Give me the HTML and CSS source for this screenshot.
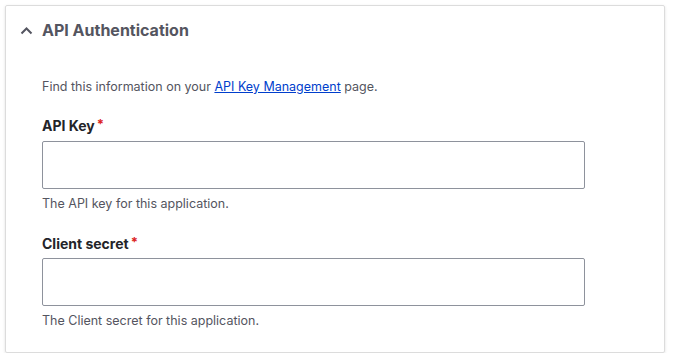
FILE: index.html
```html
<!DOCTYPE html>
<html lang="en">
<head>
    <meta charset="UTF-8">
    <meta name="viewport" content="width=device-width, initial-scale=1.0">
    <title>API Authentication</title>
    <link rel="stylesheet" href="styles.css">
</head>
<body>
    <details class="panel" open>
        <summary class="panel-title">
            <svg class="chevron" width="13" height="9" viewBox="0 0 13 9">
                <path d="M1.5 7.5 L6.5 2.5 L11.5 7.5" fill="none" stroke="#545560" stroke-width="2"/>
            </svg>
            API Authentication
        </summary>

        <div class="panel-body">
            <p class="intro">Find this information on your <a href="#">API Key Management</a> page.</p>

            <div class="field">
                <label for="apiKey">API Key<span class="req">*</span></label>
                <input type="text" id="apiKey">
                <div class="help">The API key for this application.</div>
            </div>

            <div class="field">
                <label for="clientSecret">Client secret<span class="req">*</span></label>
                <input type="text" id="clientSecret">
                <div class="help">The Client secret for this application.</div>
            </div>
        </div>
    </details>
</body>
</html>
```

FILE: styles.css
```css
/* Base Styles */
body {
    font-family: Inter, "Noto Sans", sans-serif;
    background-color: #ffffff;
    margin: 0;
    padding: 5px 8px 0 5px;
    color: #545560;
}

.panel {
    border: 1px solid #dcdcdc;
    border-radius: 2px;
    box-shadow: 0 1px 3px rgba(0, 0, 0, 0.12);
    width: 660px;
    height: 348px;
    box-sizing: border-box;
}

.panel-title {
    list-style: none;
    display: flex;
    align-items: center;
    gap: 9px;
    padding: 8px 14px 0 14px;
    height: 32px;
    font-size: 16px;
    font-weight: 700;
    color: #545560;
    cursor: pointer;
}

.panel-title::-webkit-details-marker {
    display: none;
}

.chevron {
    display: block;
}

.panel-body {
    padding: 32px 36px 0 36px;
}

.intro {
    margin: 0 0 19px;
    font-size: 12.5px;
    line-height: 18px;
}

.intro a {
    color: #003ecc;
}

.field {
    margin-bottom: 20px;
}

.field + .field label {
    margin-bottom: 5px;
}

label {
    display: block;
    font-size: 14px;
    font-weight: 700;
    color: #232429;
    line-height: 18px;
    margin-bottom: 6px;
}

.req {
    color: #dc2323;
    margin-left: 2px;
    font-size: 13px;
    vertical-align: 2px;
}

input {
    display: block;
    width: 543px;
    height: 48px;
    box-sizing: border-box;
    border: 1px solid #8e929c;
    border-radius: 2px;
    padding: 0 12px;
    font-size: 14px;
    font-family: inherit;
    margin: 0;
}

.help {
    margin-top: 6px;
    font-size: 12.5px;
    line-height: 18px;
}
```
